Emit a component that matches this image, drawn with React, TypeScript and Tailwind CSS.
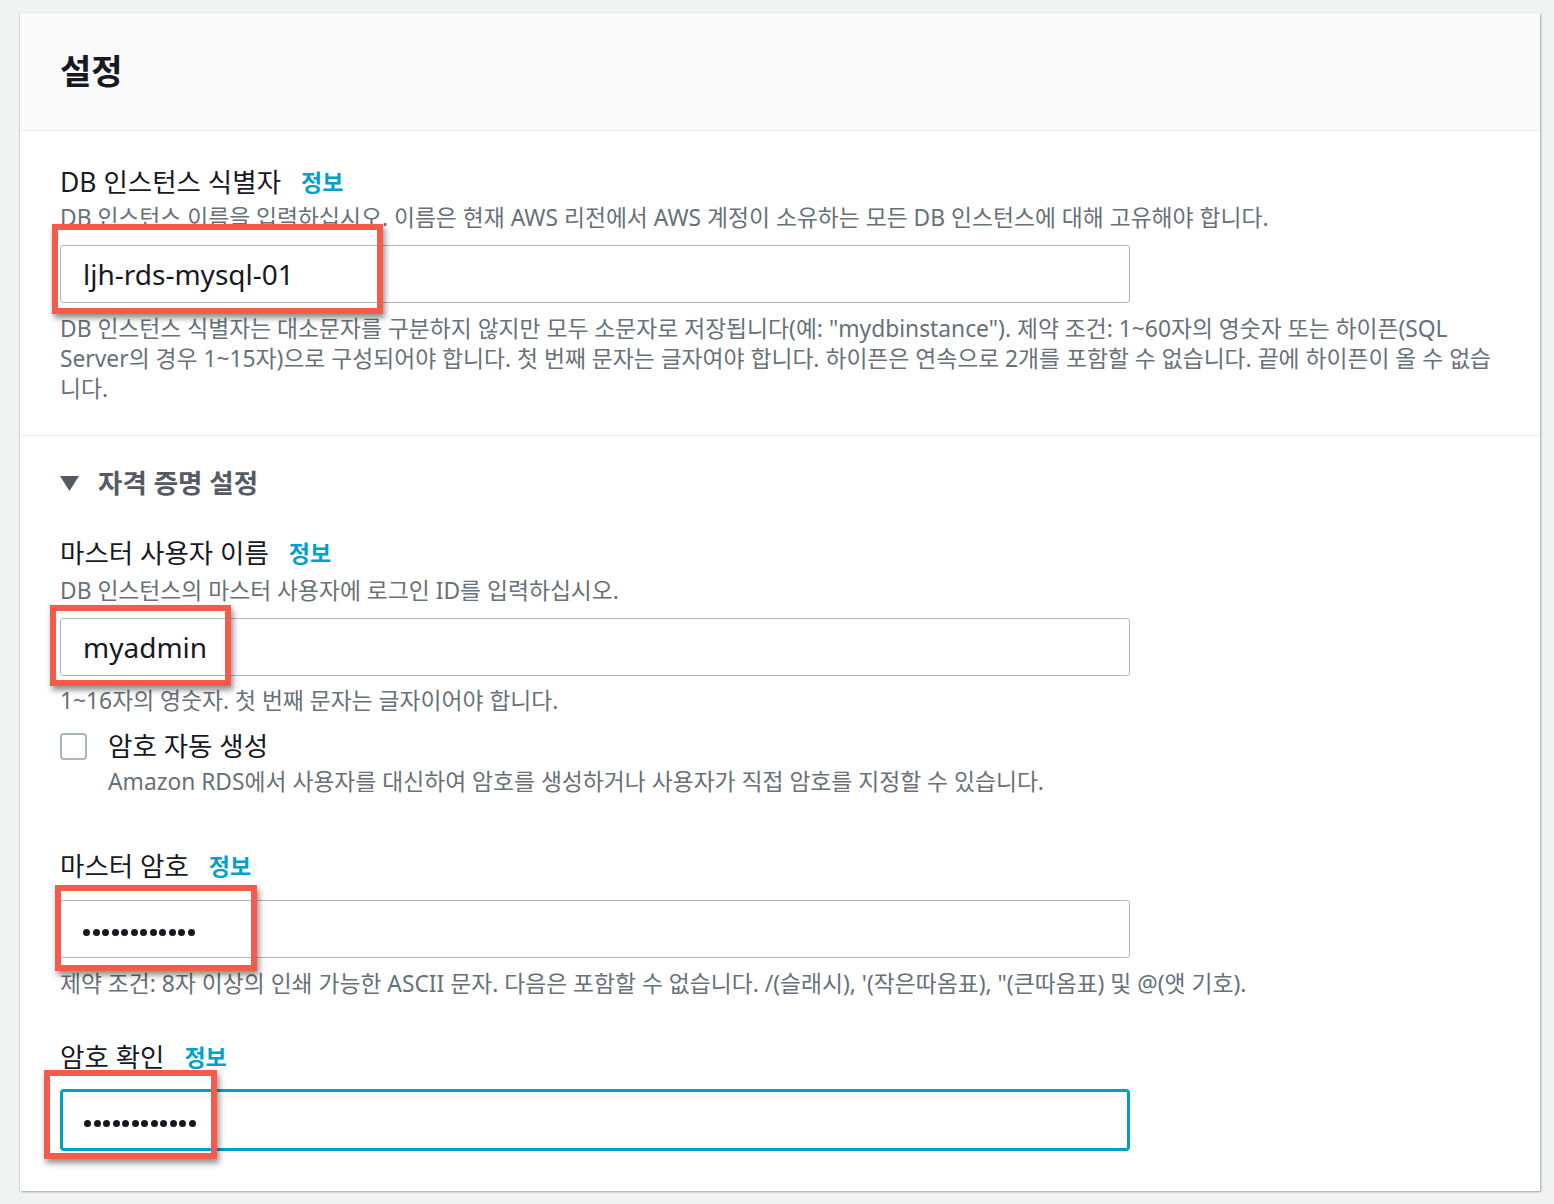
import React from "react";

const font = { fontFamily: "'Noto Sans', 'Noto Sans CJK KR', sans-serif" };

function Info() {
  return <span className="ml-[20px] text-[23px] font-bold text-[#00a1c9]">정보</span>;
}

function Label({ children }: { children: React.ReactNode }) {
  return (
    <div className="flex items-center text-[26.5px] leading-[34px] text-[#16191f]">
      <span>{children}</span>
      <Info />
    </div>
  );
}

function Highlight({ className }: { className: string }) {
  return (
    <div
      className={
        "pointer-events-none absolute border-[6px] border-[#f65a4b] shadow-[2px_4px_6px_rgba(0,0,0,0.45)] " +
        className
      }
    />
  );
}

function Field({
  value,
  focused,
  password,
  highlight,
}: {
  value: string;
  focused?: boolean;
  password?: boolean;
  highlight: string;
}) {
  return (
    <div className="relative w-[1070px]">
      <div
        className={
          focused
            ? "flex h-[62px] items-center rounded-[4px] border-[3px] border-[#00a1c9] bg-white pl-[21px]"
            : "flex h-[58px] items-center rounded-[3px] border border-[#aab7b8] bg-white pl-[22px]"
        }
      >
        {password ? (
          <span className="mt-[6px] flex gap-[2.5px]">
            {Array.from({ length: 12 }).map((_, i) => (
              <span key={i} className="h-[7px] w-[7px] rounded-full bg-[#16191f]" />
            ))}
          </span>
        ) : (
          <span className="text-[28px] text-[#16191f]">{value}</span>
        )}
      </div>
      <Highlight className={highlight} />
    </div>
  );
}

const desc = "text-[22.8px] leading-[30px] text-[#687078]";

export default function App() {
  return (
    <div className="min-h-[1204px] bg-[#f2f3f3] pl-[20px] pr-[14px] pt-[13px]" style={font}>
      <div className="bg-white shadow-[1px_1px_2px_rgba(0,28,36,0.35),-1px_0_1px_rgba(0,28,36,0.1)]">
        {/* Header */}
        <div className="flex h-[118px] items-center border-b border-[#eaeded] bg-[#fafafa] px-[40px]">
          <h2 className="text-[34px] font-bold text-[#16191f]">설정</h2>
        </div>

        {/* DB instance identifier */}
        <div className="border-b border-[#eaeded] px-[40px] pb-[31px] pt-[34px]">
          <Label>DB 인스턴스 식별자</Label>
          <p className={"mt-[4px] " + desc}>
            DB 인스턴스 이름을 입력하십시오. 이름은 현재 AWS 리전에서 AWS 계정이 소유하는 모든 DB 인스턴스에 대해 고유해야 합니다.
          </p>
          <div className="mt-[12px]">
            <Field value="ljh-rds-mysql-01" highlight="left-[-8px] top-[-21px] h-[90px] w-[331px]" />
          </div>
          <p className={"mt-[11px] " + desc}>
            DB 인스턴스 식별자는 대소문자를 구분하지 않지만 모두 소문자로 저장됩니다(예: "mydbinstance"). 제약 조건: 1~60자의 영숫자 또는 하이픈(SQL Server의 경우 1~15자)으로 구성되어야 합니다. 첫 번째 문자는 글자여야 합니다. 하이픈은 연속으로 2개를 포함할 수 없습니다. 끝에 하이픈이 올 수 없습니다.
          </p>
        </div>

        {/* Credentials */}
        <div className="px-[40px] pb-[40px] pt-[30px]">
          <div className="flex items-center text-[26.5px] font-bold leading-[34px] text-[#545b64]">
            <svg width="19" height="15" viewBox="0 0 19 15" className="mr-[19px]">
              <path d="M0 0 H19 L9.5 15 Z" fill="#545b64" />
            </svg>
            자격 증명 설정
          </div>

          <div className="mt-[36px]">
            <Label>마스터 사용자 이름</Label>
            <p className={"mt-[6px] " + desc}>DB 인스턴스의 마스터 사용자에 로그인 ID를 입력하십시오.</p>
            <div className="mt-[12px]">
              <Field value="myadmin" highlight="left-[-10px] top-[-13px] h-[81px] w-[181px]" />
            </div>
            <p className={"mt-[10px] " + desc}>1~16자의 영숫자. 첫 번째 문자는 글자이어야 합니다.</p>
          </div>

          <div className="mt-[13px] flex items-start">
            <div className="mt-[4px] h-[27px] w-[27px] shrink-0 rounded-[4px] border-2 border-[#aab7b8] bg-white" />
            <div className="ml-[21px]">
              <div className="text-[26.5px] leading-[34px] text-[#16191f]">암호 자동 생성</div>
              <p className={"mt-[4px] " + desc}>
                Amazon RDS에서 사용자를 대신하여 암호를 생성하거나 사용자가 직접 암호를 지정할 수 있습니다.
              </p>
            </div>
          </div>

          <div className="mt-[52px]">
            <Label>마스터 암호</Label>
            <div className="mt-[17px]">
              <Field value="" password highlight="left-[-5px] top-[-15px] h-[86px] w-[202px]" />
            </div>
            <p className={"mt-[11px] " + desc}>
              제약 조건: 8자 이상의 인쇄 가능한 ASCII 문자. 다음은 포함할 수 없습니다. /(슬래시), '(작은따옴표), "(큰따옴표) 및 @(앳 기호).
            </p>
          </div>

          <div className="mt-[41px]">
            <Label>암호 확인</Label>
            <div className="mt-[15px]">
              <Field value="" password focused highlight="left-[-16px] top-[-19px] h-[89px] w-[173px]" />
            </div>
          </div>
        </div>
      </div>
    </div>
  );
}
